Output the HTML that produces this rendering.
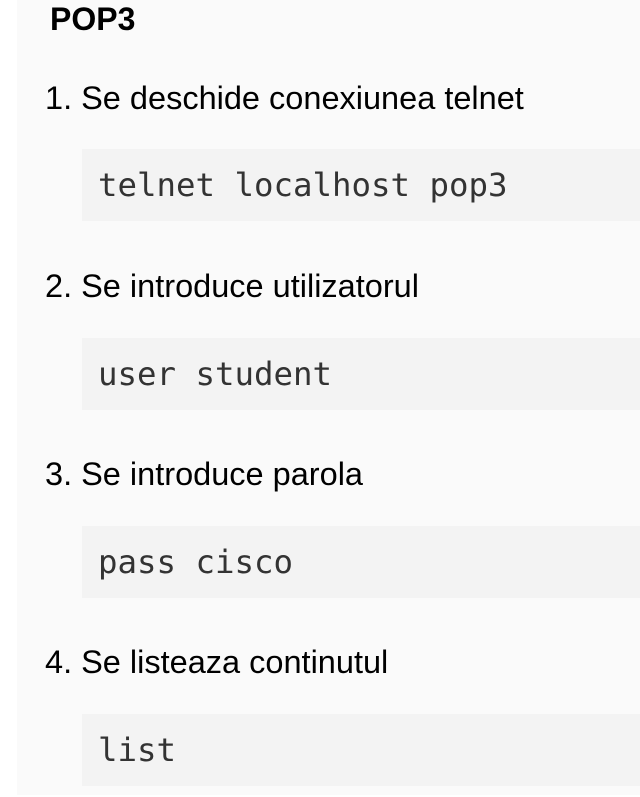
<!DOCTYPE html>
<html><head><style>
html,body{margin:0;padding:0;background:#fff;width:640px;height:797px;overflow:hidden;position:relative}
.panel{position:absolute;left:17px;top:0;width:640px;height:795px;background:#fafafa}
.t{position:absolute;font-family:"Liberation Sans",Arial,sans-serif;color:#000;white-space:nowrap}
.h{left:50px;top:1px;font-size:32px;font-weight:bold;line-height:36px}
.i{left:45px;font-size:32.5px;line-height:36px}
.c{position:absolute;left:82px;width:600px;height:72px;background:#f3f3f3;font-family:"DejaVu Sans Mono","Liberation Mono",monospace;font-size:32.4px;line-height:72px;color:#333;padding-left:16px;box-sizing:border-box;white-space:nowrap}
</style></head><body>
<div class="panel"></div>
<div class="t h">POP3</div>
<div class="t i" style="top:80px">1. Se deschide conexiunea telnet</div>
<div class="c" style="top:149px">telnet localhost pop3</div>
<div class="t i" style="top:268px">2. Se introduce utilizatorul</div>
<div class="c" style="top:338px">user student</div>
<div class="t i" style="top:456px">3. Se introduce parola</div>
<div class="c" style="top:526px">pass cisco</div>
<div class="t i" style="top:644px">4. Se listeaza continutul</div>
<div class="c" style="top:714px">list</div>
</body></html>
